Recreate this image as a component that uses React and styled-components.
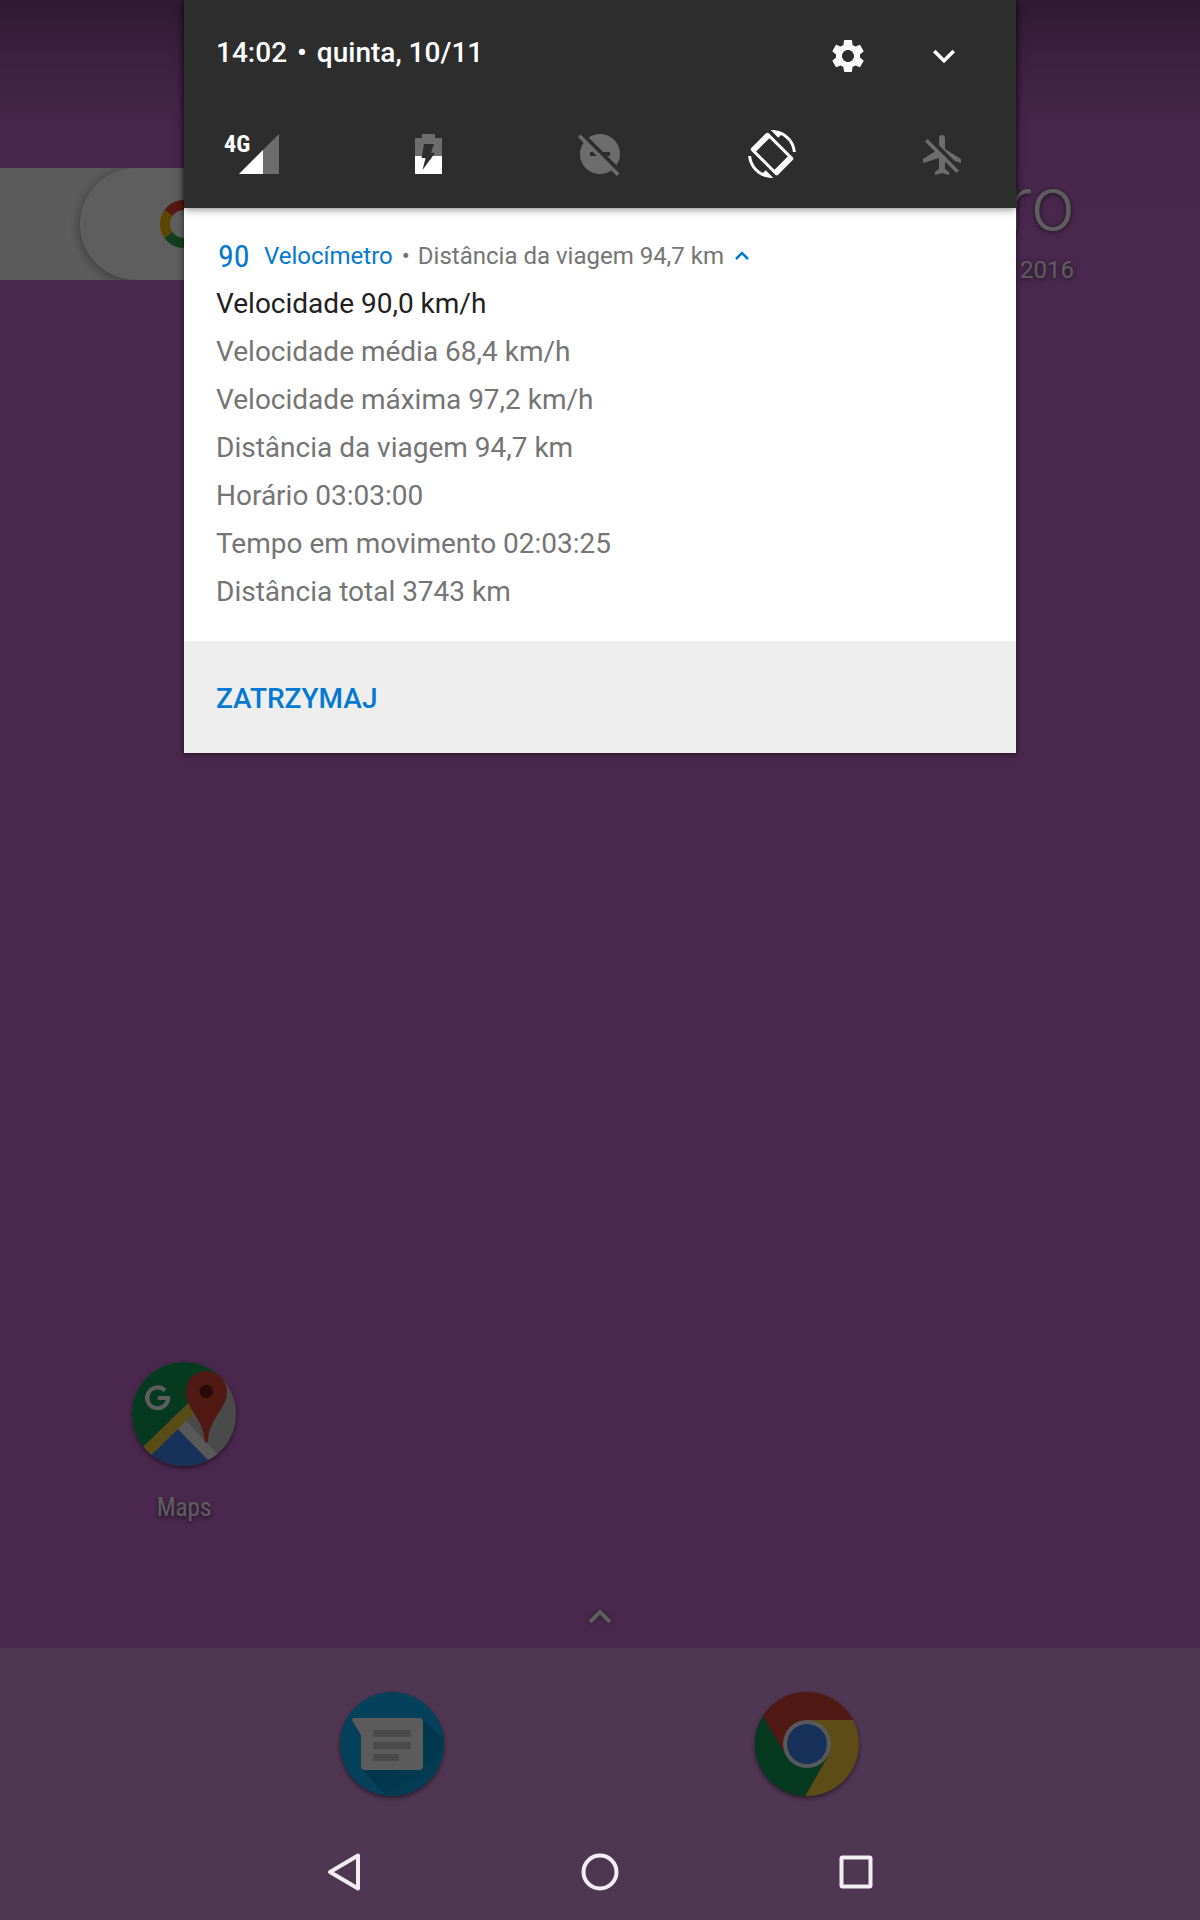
import React, { useState } from 'react';
import styled, { createGlobalStyle, css } from 'styled-components';
import { MdExpandMore, MdSettings } from 'react-icons/md';

const GlobalStyle = createGlobalStyle`
  *, *::before, *::after {
    box-sizing: border-box;
  }

  body {
    margin: 0;
    font-family: Roboto, sans-serif;
  }
`;

const condensed = css`
  font-family: 'Roboto Condensed', 'Liberation Sans Narrow', Roboto, sans-serif;
`;

const resetButton = css`
  padding: 0;
  background: none;
  border: none;
  color: inherit;
  font-family: inherit;
  cursor: pointer;
`;

/* home screen */

const Screen = styled.div`
  position: relative;
  min-height: 100vh;
`;

const Home = styled.main`
  display: flex;
  flex-direction: column;
  min-height: 100vh;
  background: linear-gradient(
    to bottom,
    #824689 0,
    #a65ab1 60px,
    #c069cd 130px,
    #c86cd4 240px
  );
`;

const Shade = styled.div`
  position: absolute;
  inset: 0;
  background: rgba(0, 0, 0, 0.63);
`;

const Widgets = styled.div`
  display: flex;
  justify-content: space-between;
  padding-top: 168px;
`;

const SearchTab = styled.div`
  height: 112px;
  padding-left: 80px;
  background: #fafafa;
`;

const SearchPill = styled.button`
  ${resetButton}
  display: flex;
  align-items: center;
  width: 160px;
  height: 112px;
  padding-left: 80px;
  background: #fff;
  border-radius: 56px 0 0 56px;
  box-shadow: 0 2px 12px rgba(0, 0, 0, 0.4);
  clip-path: inset(0 0 0 -20px);
`;

const DateWidget = styled.div`
  padding-right: 126px;
  color: #fff;
  text-align: right;
  text-shadow: 0 1px 5px rgba(0, 0, 0, 0.6);
`;

const Month = styled.div`
  font-size: 76px;
  font-weight: 300;
  line-height: 72px;
`;

const Year = styled.div`
  margin-top: 16px;
  font-size: 24px;
  line-height: 28px;
`;

const Apps = styled.div`
  display: grid;
  grid-template-columns: repeat(5, 1fr);
  margin-top: auto;
  padding: 0 80px;
`;

const AppLink = styled.a`
  display: flex;
  flex-direction: column;
  align-items: center;
  gap: 28px;
  grid-column: ${props => props.$column};
  color: #fff;
  text-decoration: none;

  svg {
    overflow: visible;
    filter: drop-shadow(0 2px 2px rgba(0, 0, 0, 0.5));
  }
`;

const AppName = styled.span`
  ${condensed}
  font-size: 25px;
  line-height: 28px;
  text-shadow: 0 2px 4px rgba(0, 0, 0, 0.6);
`;

const DrawerButton = styled.button`
  ${resetButton}
  align-self: center;
  height: 48px;
  margin: 70px 0 8px;
  color: #fff;
  filter: drop-shadow(0 0 2px rgba(0, 0, 0, 0.5));

  svg {
    display: block;
  }
`;

const Dock = styled.div`
  display: grid;
  grid-template-columns: repeat(5, 1fr);
  height: 272px;
  padding: 44px 80px 0;
  background: rgba(255, 255, 255, 0.27);
`;

const NavBar = styled.nav`
  position: absolute;
  right: 0;
  bottom: 0;
  left: 0;
  display: grid;
  grid-template-columns: repeat(3, 1fr);
  width: 64%;
  height: 96px;
  margin: 0 auto;
`;

const NavButton = styled.button`
  ${resetButton}
  display: flex;
  align-items: center;
  justify-content: center;
`;

/* notification shade */

const Panel = styled.section`
  position: absolute;
  top: 0;
  right: 0;
  left: 0;
  max-width: 832px;
  margin: 0 auto;
  box-shadow: 0 1px 6px rgba(0, 0, 0, 0.6);
`;

const QuickSettings = styled.header`
  position: relative;
  padding: 24px 48px 30px;
  background: #2d2d2d;
  box-shadow: 0 1px 8px rgba(0, 0, 0, 0.5);
  color: #fff;
`;

const StatusRow = styled.div`
  display: flex;
  align-items: center;
  justify-content: space-between;
  height: 64px;
  margin: 0 2px 42px -16px;
`;

const Clock = styled.div`
  display: flex;
  gap: 10px;
  height: 60px;
  font-size: 28px;
  font-weight: 500;
  line-height: 54px;
`;

const StatusActions = styled.div`
  display: flex;
  align-items: center;
  gap: 54px;
`;

const IconButton = styled.button`
  ${resetButton}
  display: flex;
`;

const Tiles = styled.div`
  display: flex;
  justify-content: space-between;
`;

const Tile = styled(IconButton)`
  color: ${props => (props.$off ? '#6d6d6d' : '#fff')};

  svg {
    overflow: visible;
  }
`;

const NetworkType = styled.text`
  ${condensed}
  font-size: 24px;
  font-weight: 700;
`;

const Notification = styled.article`
  background: #fff;
`;

const Content = styled.div`
  padding: 30px 32px 25px;
`;

const AppRow = styled.div`
  display: flex;
  align-items: center;
  height: 36px;
  color: #757575;
  font-size: 24px;
  line-height: 36px;
`;

const SpeedBadge = styled.span`
  ${condensed}
  min-width: 48px;
  padding-left: 2px;
  color: #0479d3;
  font-size: 32px;
`;

const AppTitle = styled.span`
  color: #0479d3;
`;

const Dot = styled.span`
  margin: 0 8px 0 9px;
`;

const CollapseButton = styled(IconButton)`
  margin-left: 8px;
  color: #0479d3;
`;

const Lines = styled.ul`
  margin: 6px 0 0;
  padding: 0;
  list-style: none;
`;

const Line = styled.li`
  color: ${props => (props.$strong ? '#212121' : '#757575')};
  font-size: 28px;
  line-height: 48px;
`;

const Actions = styled.footer`
  display: flex;
  align-items: center;
  height: 112px;
  padding: 4px 32px 0;
  background: #eee;
`;

const ActionButton = styled.button`
  ${resetButton}
  color: #0479d3;
  font-size: 28px;
  font-weight: 500;
  line-height: 48px;
`;

const GoogleLogo = () => (
  <svg width="48" height="48" viewBox="-24 -24 48 48" fill="none" strokeWidth="10">
    <path d="M-15.5 -11A19 19 0 0 1 13.4 -13.4" stroke="#ea4335" />
    <path d="M-15.5 11A19 19 0 0 1 -15.5 -11" stroke="#fbbc05" />
    <path d="M12 14.7A19 19 0 0 1 -15.5 11" stroke="#34a853" />
    <path d="M0 0H19A19 19 0 0 1 12 14.7" stroke="#4285f4" />
  </svg>
);

const MapsIcon = () => (
  <svg width="104" height="104" viewBox="0 0 104 104">
    <clipPath id="maps-disc">
      <circle cx="52" cy="52" r="52" />
    </clipPath>
    <g clipPath="url(#maps-disc)">
      <path d="M0 0H104V104H0Z" fill="#c8c8c8" />
      <path d="M0 0H98L0 96Z" fill="#0f9d58" />
      <path d="M11 85L60 38L66 47L20 93L8 104L0 96Z" fill="#f4cf3a" />
      <path d="M46 67L82 104H8Z" fill="#4285f4" />
      <path d="M46 67L54 59L92 99L80 102Z" fill="#f1f1f1" />
    </g>
    <path
      d="M74.3 9A20.7 20.7 0 0 1 95 29.7C95 47 77 56 76 79a1.700 1.700 0 0 1 -3.400 0C71.600 56 53.600 47 53.600 29.700A20.700 20.700 0 0 1 74.300 9Z"
      fill="#db4437"
    />
    <circle cx="74.3" cy="29.5" r="6.7" fill="#6e1e16" />
    <path
      d="M33 28.5A10.400 10.400 0 1 0 36 36H25.700"
      fill="none"
      stroke="#fff"
      strokeWidth="4.2"
    />
  </svg>
);

const MessagesIcon = () => (
  <svg width="104" height="104" viewBox="0 0 104 104">
    <linearGradient id="messages-shadow" x1="0" y1="0" x2="1" y2="1">
      <stop offset="0.5" stopColor="#0494d2" />
      <stop offset="0.85" stopColor="#0ba6e8" />
    </linearGradient>
    <circle cx="52" cy="52" r="52" fill="#10b0f5" />
    <path d="M82 27L103 46A52 52 0 0 1 45 103L22 77Z" fill="url(#messages-shadow)" />
    <path
      d="M14 26H79a4 4 0 0 1 4 4V74a4 4 0 0 1 -4 4H25a4 4 0 0 1 -4 -4V43L12.5 29Q11.5 26 14 26Z"
      fill="#fafafa"
    />
    <path d="M33 38H71V45H33ZM33 50H71V57H33ZM33 62H59V69H33Z" fill="#c8c8c8" />
  </svg>
);

const ChromeIcon = () => (
  <svg width="104" height="104" viewBox="-51 -52 104 104">
    <path d="M-44 -28A52 52 0 0 1 46 -24H0L-21 12Z" fill="#db4437" />
    <path d="M46 -24A52 52 0 0 1 -2 52L21 12L0 -24Z" fill="#ffcd40" />
    <path d="M-2 52A52 52 0 0 1 -44 -28L-21 12H21Z" fill="#0f9d58" />
    <circle r="24" fill="#f1f1f1" />
    <circle r="20" fill="#4285f4" />
  </svg>
);

const SignalIcon = () => (
  <svg width="48" height="48" viewBox="0 0 48 48">
    <path d="M47 4V44H7Z" fill="#6d6d6d" />
    <path d="M31 20V44H7Z" fill="#fff" />
    <NetworkType x="-8" y="22" fill="#fff">4G</NetworkType>
  </svg>
);

const BatteryIcon = () => (
  <svg width="48" height="48" viewBox="0 0 48 48">
    <path d="M18 4H31V8H38V26H11V8H18Z" fill="#6d6d6d" />
    <path d="M11 26H38V44H11Z" fill="#fff" />
    <path d="M20 14H30L27 22.5L31 23L18.5 40L21.5 28H17.5Z" fill="#2d2d2d" />
  </svg>
);

const DisturbIcon = () => (
  <svg width="48" height="48" viewBox="0 0 24 24" fill="currentColor">
    <path d="M17 11v2h-1.46l4.68 4.68C21.34 16.07 22 14.11 22 12c0-5.52-4.48-10-10-10-2.11 0-4.07.66-5.68 1.78L13.54 11H17zM2.27 2.27L1 3.54l2.78 2.78C2.66 7.93 2 9.89 2 12c0 5.52 4.48 10 10 10 2.11 0 4.07-.66 5.68-1.78L20.46 23l1.27-1.27L2.27 2.27zM7 13v-2h1.46l2 2H7z" />
  </svg>
);

const RotateIcon = () => (
  <svg width="48" height="48" viewBox="0 0 24 24" fill="currentColor">
    <path d="M16.48 2.52c3.27 1.55 5.61 4.72 5.97 8.48h1.5C23.44 4.84 18.29 0 12 0l-.66.03 3.81 3.81 1.33-1.32zM7.52 21.48C4.25 19.94 1.91 16.76 1.55 13H.05C.56 19.16 5.71 24 12 24l.66-.03-3.81-3.81-1.33 1.32z" />
    <path
      fillRule="evenodd"
      transform="rotate(45 12 12)"
      d="M3.700 5.8H20.300a1.200 1.200 0 0 1 1.200 1.200V17a1.200 1.200 0 0 1 -1.200 1.200H3.700a1.200 1.200 0 0 1 -1.200 -1.200V7a1.200 1.200 0 0 1 1.200 -1.200ZM5.500 7.300V16.700H18.500V7.300Z"
    />
  </svg>
);

const AirplaneIcon = () => (
  <svg width="48" height="48" viewBox="0 0 24 24" fill="currentColor">
    <path d="M12.5 9.5V4c0-.83-.67-1.5-1.5-1.5S9.5 3.17 9.5 4v3.680l7.830 7.830 3.170.99v-2l-8-5zM2.500 5.770l4.990 4.990L1.500 14.500v2l8-2.500v5.500l-2 1.500v1.500l3.500-1 3.500 1V21l-2-1.500v-3.730l5.730 5.730 1.270-1.270L3.770 4.500 2.500 5.770z" />
  </svg>
);

const tiles = [
  { label: 'Rede móvel 4G', Icon: SignalIcon },
  { label: 'Bateria', Icon: BatteryIcon },
  { label: 'Não perturbe', Icon: DisturbIcon, off: true },
  { label: 'Girar automaticamente', Icon: RotateIcon },
  { label: 'Modo avião', Icon: AirplaneIcon, off: true },
];

const details = [
  'Velocidade média 68,4 km/h',
  'Velocidade máxima 97,2 km/h',
  'Distância da viagem 94,7 km',
  'Horário 03:03:00',
  'Tempo em movimento 02:03:25',
  'Distância total 3743 km',
];

const App = () => {
  const [expanded, setExpanded] = useState(true);

  return (
    <Screen>
      <GlobalStyle />
      <Home>
        <Widgets>
          <SearchTab>
            <SearchPill aria-label="Google">
              <GoogleLogo />
            </SearchPill>
          </SearchTab>
          <DateWidget>
            <Month>novembro</Month>
            <Year>2016</Year>
          </DateWidget>
        </Widgets>
        <Apps>
          <AppLink href="#maps" $column={1}>
            <MapsIcon />
            <AppName>Maps</AppName>
          </AppLink>
        </Apps>
        <DrawerButton aria-label="Apps">
          <svg width="48" height="48" viewBox="0 0 48 48" fill="none">
            <path d="M14 30L24 20L34 30" stroke="currentColor" strokeWidth="4" />
          </svg>
        </DrawerButton>
        <Dock>
          <AppLink href="#messages" aria-label="Mensagens" $column={2}>
            <MessagesIcon />
          </AppLink>
          <AppLink href="#chrome" aria-label="Chrome" $column={4}>
            <ChromeIcon />
          </AppLink>
        </Dock>
      </Home>
      <Shade />

      <Panel>
        <QuickSettings>
          <StatusRow>
            <Clock>
              <span>14:02</span>
              <span>•</span>
              <span>quinta, 10/11</span>
            </Clock>
            <StatusActions>
              <IconButton aria-label="Configurações">
                <MdSettings size={40} />
              </IconButton>
              <IconButton aria-label="Expandir">
                <MdExpandMore size={44} />
              </IconButton>
            </StatusActions>
          </StatusRow>
          <Tiles>
            {tiles.map(({ label, Icon, off }) => (
              <Tile key={label} aria-label={label} $off={off}>
                <Icon />
              </Tile>
            ))}
          </Tiles>
        </QuickSettings>
        <Notification>
          <Content>
            <AppRow>
              <SpeedBadge>90</SpeedBadge>
              <AppTitle>Velocímetro</AppTitle>
              <Dot>•</Dot>
              <span>Distância da viagem 94,7 km</span>
              <CollapseButton
                aria-label="Recolher"
                aria-expanded={expanded}
                onClick={() => setExpanded(!expanded)}
              >
                <svg width="20" height="20" viewBox="0 0 20 20" fill="none">
                  <path d="M4 13L10 7L16 13" stroke="currentColor" strokeWidth="2.5" />
                </svg>
              </CollapseButton>
            </AppRow>
            <Lines>
              <Line $strong>Velocidade 90,0 km/h</Line>
              {expanded && details.map(text => <Line key={text}>{text}</Line>)}
            </Lines>
          </Content>
          <Actions>
            <ActionButton>ZATRZYMAJ</ActionButton>
          </Actions>
        </Notification>
      </Panel>

      <NavBar>
        <NavButton aria-label="Voltar">
          <svg width="48" height="48" viewBox="0 0 48 48" fill="none">
            <path
              d="M38 7.5V40.5L10 24Z"
              stroke="#f2eef2"
              strokeWidth="4"
              strokeLinejoin="round"
            />
          </svg>
        </NavButton>
        <NavButton aria-label="Início">
          <svg width="48" height="48" viewBox="0 0 48 48" fill="none">
            <circle cx="24" cy="24" r="16.5" stroke="#f2eef2" strokeWidth="4" />
          </svg>
        </NavButton>
        <NavButton aria-label="Recentes">
          <svg width="48" height="48" viewBox="0 0 48 48" fill="none">
            <rect x="9.5" y="9.5" width="29" height="29" rx="1" stroke="#f2eef2" strokeWidth="4" />
          </svg>
        </NavButton>
      </NavBar>
    </Screen>
  );
};

export default App;
